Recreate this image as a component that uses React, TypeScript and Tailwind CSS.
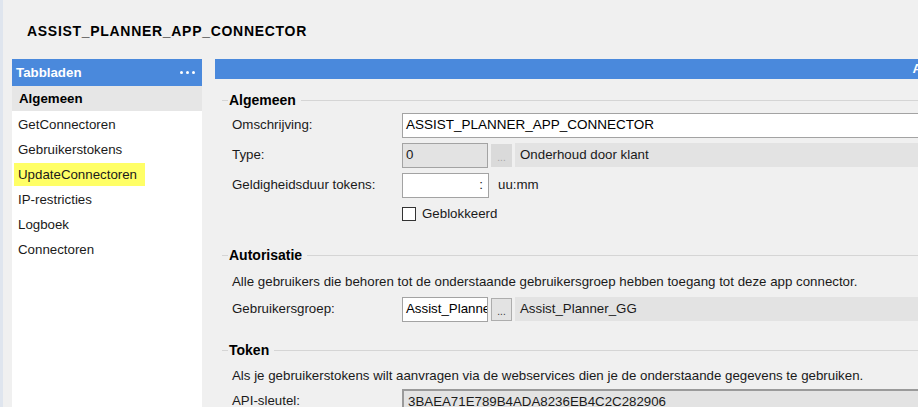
import { useState } from "react";

const tabs = [
  "GetConnectoren",
  "Gebruikerstokens",
  "UpdateConnectoren",
  "IP-restricties",
  "Logboek",
  "Connectoren",
];

function GroupHeader({ title }: { title: string }) {
  return (
    <div className="flex items-center h-[22px] pl-[7px]">
      <div className="w-[6px] h-px bg-[#d5d5d5]" />
      <span className="font-bold text-[14px] text-black px-[1px]">{title}</span>
      <div className="flex-1 h-px bg-[#d5d5d5] ml-[4px]" />
    </div>
  );
}

function Label({ children }: { children: React.ReactNode }) {
  return <div className="w-[187px] pl-[17px] shrink-0">{children}</div>;
}

function LookupButton({ disabled }: { disabled?: boolean }) {
  return (
    <div
      className={`w-[21px] h-[23px] ml-[3px] flex items-end justify-center pb-[3px] text-[10px] leading-none border ${
        disabled
          ? "bg-[#dadada] border-[#dadada] text-[#a5a5a5]"
          : "bg-[#e3e3e3] border-[#adadad] text-[#333]"
      }`}
    >
      ...
    </div>
  );
}

export default function App() {
  const [active] = useState("Algemeen");

  return (
    <div
      className="w-[918px] h-[407px] overflow-hidden bg-[#f0f0f0] text-[13.3px] text-[#1a1a1a] border-l-[3px] border-[#dfe5ee]"
      style={{ fontFamily: '"Liberation Sans", Arial, sans-serif' }}
    >
      {/* Title */}
      <div className="h-[59px] pl-[24px] pt-[21px]">
        <span className="font-bold text-[14px] tracking-[0.7px] text-black">
          ASSIST_PLANNER_APP_CONNECTOR
        </span>
      </div>

      <div className="flex h-[348px]">
        {/* Tabbladen */}
        <div className="w-[190px] ml-[9px] flex flex-col">
          <div className="h-[27px] bg-[#4a89dc] flex items-center justify-between pl-[4px] pr-[7px] text-white font-bold">
            <span>Tabbladen</span>
            <span className="flex gap-[3px]">
              <span className="w-[3px] h-[3px] bg-white rounded-full" />
              <span className="w-[3px] h-[3px] bg-white rounded-full" />
              <span className="w-[3px] h-[3px] bg-white rounded-full" />
            </span>
          </div>
          <div className="h-[25px] bg-[#e6e6e6] flex items-center pl-[7px] font-bold text-black">
            {active}
          </div>
          <div className="flex-1 bg-white pt-[1px]">
            {tabs.map((t) => (
              <div key={t} className="h-[25px] flex items-center pl-[2px]">
                <span
                  className={`px-[4px] h-[23px] flex items-center ${
                    t === "UpdateConnectoren" ? "bg-[#ffff66] pr-[8px]" : ""
                  }`}
                >
                  {t}
                </span>
              </div>
            ))}
          </div>
        </div>

        {/* Content */}
        <div className="flex-1 ml-[13px] flex flex-col">
          <div className="h-[27px] bg-[#4a89dc] flex items-center justify-end text-white font-bold text-[13px]">
            <span className="translate-x-[4px]">A</span>
          </div>

          <div className="pt-[11px]">
            <GroupHeader title="Algemeen" />

            <div className="flex items-center h-[25px] mt-[1px]">
              <Label>Omschrijving:</Label>
              <div className="flex-1 h-[25px] bg-white border border-[#a3a3a3] border-r-0 flex items-center pl-[3px] text-[13.5px] text-black">
                ASSIST_PLANNER_APP_CONNECTOR
              </div>
            </div>

            <div className="flex items-center h-[25px] mt-[5px]">
              <Label>Type:</Label>
              <div className="w-[86px] h-[25px] bg-[#e3e3e3] border border-[#a3a3a3] flex items-center pl-[3px]">
                0
              </div>
              <LookupButton disabled />
              <div className="flex-1 h-[24px] ml-[3px] bg-[#e3e3e3] flex items-center pl-[5px]">
                Onderhoud door klant
              </div>
            </div>

            <div className="flex items-center h-[25px] mt-[5px]">
              <Label>Geldigheidsduur tokens:</Label>
              <div className="w-[87px] h-[25px] bg-white border border-[#a3a3a3] flex items-center justify-end pr-[5px]">
                :
              </div>
              <span className="ml-[9px]">uu:mm</span>
            </div>

            <div className="flex items-center h-[20px] mt-[6px]">
              <div className="w-[187px] shrink-0" />
              <div className="w-[14px] h-[14px] bg-white border border-[#333]" />
              <span className="ml-[6px]">Geblokkeerd</span>
            </div>

            <div className="mt-[21px]">
              <GroupHeader title="Autorisatie" />
            </div>
            <div className="h-[22px] flex items-center pl-[17px] mt-[4px]">
              Alle gebruikers die behoren tot de onderstaande gebruikersgroep hebben toegang tot deze app connector.
            </div>
            <div className="flex items-center h-[25px] mt-[4px]">
              <Label>Gebruikersgroep:</Label>
              <div className="w-[86px] h-[25px] bg-white border border-[#a3a3a3] flex items-center pl-[3px] overflow-hidden whitespace-nowrap text-black">
                Assist_Planne
              </div>
              <LookupButton />
              <div className="flex-1 h-[24px] ml-[3px] bg-[#e3e3e3] flex items-center pl-[5px]">
                Assist_Planner_GG
              </div>
            </div>

            <div className="mt-[18px]">
              <GroupHeader title="Token" />
            </div>
            <div className="h-[22px] flex items-center pl-[17px] mt-[3px]">
              Als je gebruikerstokens wilt aanvragen via de webservices dien je de onderstaande gegevens te gebruiken.
            </div>
            <div className="flex items-center h-[25px] mt-[2px]">
              <Label>API-sleutel:</Label>
              <div className="flex-1 h-[25px] bg-[#e3e3e3] border-t-2 border-l-2 border-[#9a9a9a] flex items-center pl-[4px]">
                3BAEA71E789B4ADA8236EB4C2C282906
              </div>
            </div>
          </div>
        </div>
      </div>
    </div>
  );
}
